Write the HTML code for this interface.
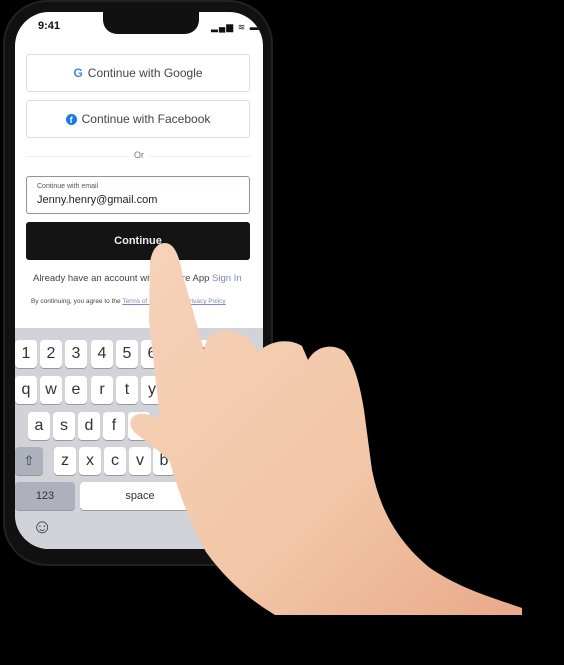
<!DOCTYPE html>
<html><head><meta charset="utf-8"><style>
*{margin:0;padding:0;box-sizing:border-box}
body{width:564px;height:665px;background:#000;position:relative;overflow:hidden;font-family:"Liberation Sans",sans-serif}
.phone{position:absolute;left:3px;top:0;width:270px;height:566px;border-radius:44px;background:#111;border:2px solid #222}
.screen{position:absolute;left:15px;top:12px;width:248px;height:537px;border-radius:34px;background:#fff;overflow:hidden}
.notch{position:absolute;left:88px;top:0;width:96px;height:22px;background:#111;border-radius:0 0 14px 14px}
.a{position:absolute}
.btn{position:absolute;left:11px;width:224px;height:38px;border:1px solid #ddd;border-radius:3px;font-size:12px;color:#444;display:flex;align-items:center;justify-content:center;gap:5px}
.kb{position:absolute;left:0;top:316px;width:248px;height:221px;background:#d1d3d9}
.k{position:absolute;width:22px;height:28px;background:#fff;border-radius:4px;box-shadow:0 1px 0 #999;font-size:16px;color:#333;text-align:center;line-height:28px}
</style></head><body>
<div class="phone"></div>
<div class="screen">
<div class="notch"></div>
<div class="a" style="left:23px;top:8px;font-size:11px;font-weight:bold;color:#111">9:41</div>
<div class="a" style="left:196px;top:10px;font-size:9px;color:#111;letter-spacing:1px">▂▄▆ ≋ ▬</div>
<div class="btn" style="top:42px"><b style="color:#4285f4;font-size:12px">G</b>Continue with Google</div>
<div class="btn" style="top:88px"><span style="display:inline-block;width:11px;height:11px;border-radius:50%;background:#1877f2;color:#fff;font-size:9px;line-height:12px;text-align:center;font-weight:bold">f</span>Continue with Facebook</div>
<div class="a" style="left:11px;top:144px;width:224px;height:1px;background:#eee"></div>
<div class="a" style="left:114px;top:138px;background:#fff;padding:0 5px;font-size:9px;color:#777">Or</div>
<div class="a" style="left:11px;top:164px;width:224px;height:38px;border:1px solid #8a8fc7;border-radius:3px"></div>
<div class="a" style="left:22px;top:171px;font-size:7px;color:#555">Continue with email</div>
<div class="a" style="left:22px;top:182px;font-size:11px;color:#222">Jenny.henry@gmail.com</div>
<div class="a" style="left:11px;top:210px;width:224px;height:38px;background:#141414;border-radius:3px;color:#eee;font-size:11px;font-weight:bold;text-align:center;line-height:38px">Continue</div>
<div class="a" style="left:18px;top:261px;font-size:9.5px;color:#444">Already have an account with Square App <span style="color:#7b86d6">Sign In</span></div>
<div class="a" style="left:16px;top:286px;font-size:6.5px;color:#444">By continuing, you agree to the <u style="color:#7b86d6">Terms of Service</u> and <u style="color:#7b86d6">Privacy Policy</u></div>
<div class="kb">
<div class="k" style="left:0;top:12px">1</div><div class="k" style="left:25px;top:12px">2</div><div class="k" style="left:50px;top:12px">3</div><div class="k" style="left:76px;top:12px">4</div><div class="k" style="left:101px;top:12px">5</div><div class="k" style="left:126px;top:12px">6</div><div class="k" style="left:151px;top:12px">7</div><div class="k" style="left:176px;top:12px">8</div>
<div class="k" style="left:0;top:48px">q</div><div class="k" style="left:25px;top:48px">w</div><div class="k" style="left:50px;top:48px">e</div><div class="k" style="left:76px;top:48px">r</div><div class="k" style="left:101px;top:48px">t</div><div class="k" style="left:126px;top:48px">y</div><div class="k" style="left:151px;top:48px">u</div>
<div class="k" style="left:13px;top:84px">a</div><div class="k" style="left:38px;top:84px">s</div><div class="k" style="left:63px;top:84px">d</div><div class="k" style="left:88px;top:84px">f</div><div class="k" style="left:113px;top:84px">g</div>
<div class="k" style="left:0;top:119px;width:28px;background:#adb1bb;font-size:13px">⇧</div>
<div class="k" style="left:39px;top:119px">z</div><div class="k" style="left:64px;top:119px">x</div><div class="k" style="left:89px;top:119px">c</div><div class="k" style="left:114px;top:119px">v</div><div class="k" style="left:138px;top:119px">b</div>
<div class="k" style="left:0;top:154px;width:60px;background:#adb1bb;font-size:11px">123</div>
<div class="k" style="left:65px;top:154px;width:120px;font-size:11px">space</div>
<div class="a" style="left:17px;top:188px;font-size:20px;color:#444">☺</div>
<div class="a" style="left:72px;top:228px;width:84px;height:4px;border-radius:2px;background:#111"></div>
</div>
</div>
<svg class="a" style="left:0;top:0" width="564" height="665">
<defs><linearGradient id="g" x1="0" y1="0" x2="1" y2="1"><stop offset="0" stop-color="#f6d3bb"/><stop offset="0.6" stop-color="#f2c6a6"/><stop offset="1" stop-color="#e8a98a"/></linearGradient></defs>
<path fill="url(#g)" d="M165,243 C174,243 179,255 182,272 L204,350 C206,334 218,328 232,331 C246,334 254,342 258,352 C270,340 290,338 302,346 L308,360 C316,346 332,343 344,351 C354,362 360,385 364,410 L372,470 C380,510 398,542 430,568 C462,590 500,600 522,608 L522,615 L275,615 C250,600 226,580 206,552 C190,522 178,492 170,462 C160,450 146,442 134,432 C126,422 132,412 146,414 L160,418 C157,390 153,360 149,320 L150,262 C152,250 157,243 165,243 Z"/>
</svg>
</body></html>
